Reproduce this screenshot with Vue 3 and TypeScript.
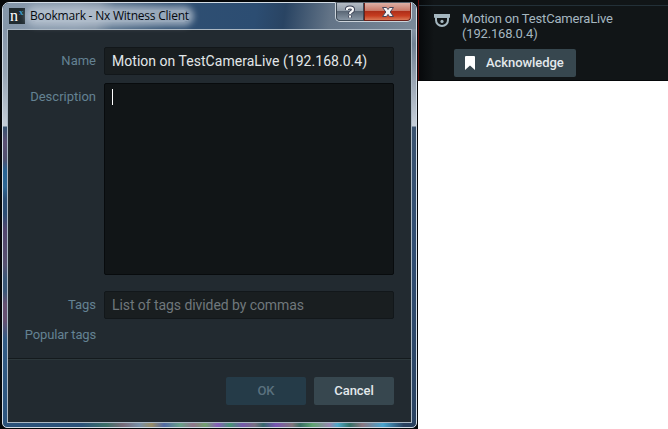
<script setup lang="ts">
import { ref } from 'vue'

const name = ref('Motion on TestCameraLive (192.168.0.4)')
const description = ref('')
const placeholder = 'List of tags divided by commas'
</script>

<template>
  <main class="screen">
    <div class="backdrop">
      <section class="window">
        <header class="titlebar">
          <div class="app-icon"><span class="n">n</span><span class="x">x</span></div>
          <h1 class="title">Bookmark - Nx Witness Client</h1>
          <div class="controls">
            <button class="control help" aria-label="Help">
              <svg width="12" height="14" viewBox="0 0 12 14">
                <path class="outline" d="M3 5V4Q3 2.5 6 2.5T9 4.5Q9 6 7.5 6.7Q6 7.4 6 9M6 10.5v2" />
                <path class="mark" d="M3 5V4Q3 2.5 6 2.5T9 4.5Q9 6 7.5 6.7Q6 7.4 6 9M6 10.5v2" />
              </svg>
            </button>
            <button class="control close" aria-label="Close">
              <svg width="14" height="12" viewBox="0 0 14 12">
                <path class="cross" d="M1.5 1.5h4L7 3.5l1.5-2h4L9.2 6l3.3 4.5h-4L7 8.4l-1.5 2.1h-4L4.8 6z" />
              </svg>
            </button>
          </div>
        </header>
        <form class="body" @submit.prevent>
          <div class="fields">
            <div class="row">
              <label>Name</label>
              <div class="input name">{{ name }}</div>
            </div>
            <div class="row">
              <label>Description</label>
              <div class="input area"><i class="caret"></i>{{ description }}</div>
            </div>
            <div class="row tags">
              <label>Tags</label>
              <div class="input empty">{{ placeholder }}</div>
            </div>
            <div class="row popular"><label>Popular tags</label></div>
          </div>
          <footer class="actions">
            <button class="btn ok" disabled>OK</button>
            <button class="btn">Cancel</button>
          </footer>
        </form>
      </section>
    </div>
    <aside class="notice">
      <svg class="camera" width="16" height="13" viewBox="0 0 16 13">
        <path d="M0 0h16v3q0 1-1 1H1Q0 4 0 3z" fill="#a5b7c0" />
        <path d="M2 4v2a6 6 0 0 0 12 0V4" fill="none" stroke="#a5b7c0" stroke-width="2" />
        <circle cx="8" cy="7.4" r="1.6" fill="#a5b7c0" />
      </svg>
      <div class="message">
        <p>Motion on TestCameraLive<br />(192.168.0.4)</p>
        <button class="btn ack">
          <svg width="10" height="14" viewBox="0 0 10 14">
            <path d="M1 0h8q1 0 1 1v13L5 9.5 0 14V1q0-1 1-1z" fill="#fff" />
          </svg>
          Acknowledge
        </button>
      </div>
    </aside>
  </main>
</template>

<style>
body {
  margin: 0;
  background: #fff;
}
</style>

<style scoped>
* {
  box-sizing: border-box;
}
.screen {
  width: 668px;
  height: 429px;
  display: flex;
  align-items: flex-start;
  overflow: hidden;
  font-family: Roboto, 'Liberation Sans', sans-serif;
  background: #fff;
}
.backdrop {
  width: 418px;
  height: 429px;
  padding: 2px 1px 1px 2px;
  background: #050709;
}
.window {
  height: 426px;
  padding: 0 4px 4px;
  border: 1px solid #d3dde6;
  border-radius: 7px 7px 5px 5px;
  background:
    linear-gradient(90deg, #2b527a 19%, #3c7068 25%, #776a78 29%, #7890a8 33%, #988c66 36%, #526aa5 39%, #68a187 43%, #91758b 46%, #72a16f 49%, #875dbb 52%, #459474 55%, #7659ac 58%, #786f81 61%, #35696c 63%, #7854b3 66%, #81747b 70%, #397065 72%, #60a572 75%, #9787b0 79%, #4da9ca 81%, #347167 84%, #8b7681 87%, #48a5cf 92%, #29415f 97%) 0 100% / 100% 4px no-repeat,
    linear-gradient(180deg, #8795a5, #718294 15px, #929ead 45px, #c7d0da 97px, #3a5370 98px, #314e73 220px, #29415f) 100% 26px / 4px 100% no-repeat,
    linear-gradient(180deg, #8595a8 0, #97a5b4 45px, #c4cdd7 97px, #37536f 98px, #5b5073 113px, #51506e 130px, #276393 142px, #2c6592 158px, #2b4d73 170px, #2b4d73 185px, #51456d 200px, #57506f 235px, #395777 250px, #395777 262px, #655070 275px, #655070 292px, #315b85 310px, #2a527b) 0 26px / 4px 100% no-repeat,
    #2c4c70;
}
.titlebar {
  height: 26px;
  margin: 0 -4px;
  padding-left: 6px;
  display: flex;
  align-items: flex-start;
  border-radius: 6px 6px 0 0;
  background: linear-gradient(98deg, #8496a9 0%, #8a9bae 18%, #8192a5 23%, #56708b 27%, #2f4f72 40%, #2c4d72 61%, #294463 68%, #637487 79%, #7a8999 100%);
}
.app-icon {
  width: 16px;
  height: 16px;
  margin-top: 5px;
  display: flex;
  background: #202b30;
  color: #fff;
  font-family: 'Liberation Serif', serif;
  line-height: 16px;
  overflow: hidden;
}
.n {
  width: 9px;
  padding-left: 1px;
  font-size: 16px;
}
.x {
  margin: -4px 0 0 1px;
  color: #3798c8;
  font-size: 9px;
  font-weight: bold;
}
.title {
  width: 160px;
  height: 12px;
  margin: 7px 0 0 5px;
  border-radius: 6px;
  background: rgba(190, 201, 213, 0.72);
  box-shadow: 0 0 6px 4px rgba(190, 201, 213, 0.72);
  color: #05090f;
  font: 12px/12px 'Open Sans', 'Noto Sans', sans-serif;
  letter-spacing: -0.22px;
  white-space: nowrap;
}
.controls {
  width: 77px;
  height: 20px;
  margin: -1px 4px 0 auto;
  display: flex;
  border: 1px solid #cbd3da;
  border-top-color: #59636e;
  border-radius: 0 0 5px 5px;
  overflow: hidden;
}
.control {
  padding: 0;
  display: flex;
  align-items: center;
  justify-content: center;
  border: 1px solid #3c4854;
  border-top: 0;
}
.help {
  width: 28px;
  border-radius: 0 0 0 4px;
  background: linear-gradient(#b4bcc5 0, #929da9 45%, #5b6877 50%, #8795a3);
}
.close {
  width: 47px;
  border-color: #6d211a;
  border-radius: 0 0 4px 0;
  background: linear-gradient(#dcb0a6 0, #c97a69 44%, #ae2e19 49%, #c63d20 75%, #da7956);
}
.outline,
.mark {
  fill: none;
  stroke: #3b4054;
  stroke-width: 4;
}
.mark {
  stroke: #f6f7f8;
  stroke-width: 2.2;
}
.cross {
  fill: #f4f4f5;
  stroke: #464459;
  stroke-width: 1;
}
.body {
  height: 394px;
  border: 1px solid #abb8c4;
  background: #222a30;
}
.fields {
  height: 329px;
  padding: 17px 17px 0 8px;
  border-bottom: 1px solid #141a1d;
}
.row {
  display: flex;
  gap: 8px;
  margin-bottom: 8px;
}
.row label {
  width: 80px;
  padding-top: 6px;
  color: #648293;
  font-size: 13px;
  line-height: 16px;
  text-align: right;
  white-space: nowrap;
}
.popular label {
  letter-spacing: -0.17px;
}
.input {
  flex: 1;
  height: 28px;
  padding: 0 7px;
  border: 1px solid #12171a;
  border-radius: 2px;
  background: #191e20;
  color: #e2e7e9;
  font-size: 14px;
  line-height: 27px;
  white-space: nowrap;
}
.name {
  letter-spacing: 0.03px;
}
.area {
  height: 192px;
  padding-top: 5px;
  border-color: #080b0d;
  background: #111517;
}
.caret {
  display: block;
  width: 1px;
  height: 16px;
  background: #fff;
}
.tags {
  margin-top: 16px;
  margin-bottom: 2px;
}
.empty {
  color: #70787c;
  letter-spacing: -0.07px;
}
.actions {
  height: 63px;
  padding: 17px 17px 0 0;
  display: flex;
  justify-content: flex-end;
  gap: 8px;
  border-top: 1px solid #2c373b;
}
.btn {
  width: 80px;
  height: 28px;
  padding: 0;
  border: 0;
  border-radius: 2px;
  background: #37474f;
  color: #e3e9ec;
  font: 500 13px/28px Roboto, 'Liberation Sans', sans-serif;
  letter-spacing: -0.06px;
}
.ok {
  background: #253b48;
  color: #5a717e;
}
.notice {
  width: 250px;
  height: 81px;
  padding: 11px 0 0 15px;
  display: flex;
  border-left: 1px solid #650d0b;
  border-bottom: 1px solid #050709;
  background:
    linear-gradient(#233038, #233038) 0 5px / 100% 1px no-repeat,
    linear-gradient(90deg, #07090b, #111517 15px);
}
.camera {
  margin-top: 3px;
}
.message {
  padding-left: 12px;
}
.message p {
  margin: 0;
  color: #a5b7c0;
  font-size: 13px;
  line-height: 15px;
  letter-spacing: -0.17px;
}
.ack {
  width: 122px;
  margin: 8px 0 0 -8px;
  padding-left: 11px;
  display: flex;
  align-items: center;
  gap: 11px;
}
</style>
